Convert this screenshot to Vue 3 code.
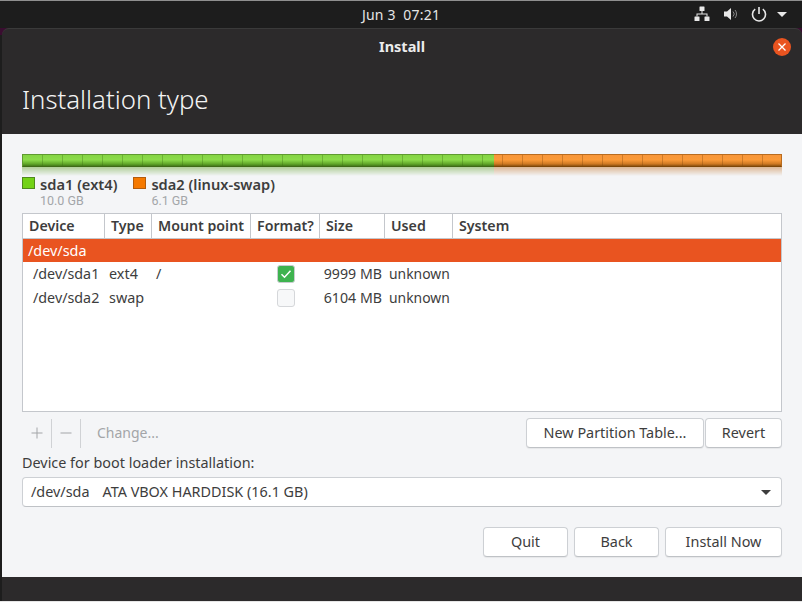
<template>
  <div class="screen">
    <div class="topbar">
      <div class="clock">Jun 3&nbsp; 07:21</div>
      <div class="tray">
        <svg width="16" height="16" viewBox="0 0 16 16" class="net">
          <rect x="5.5" y="0.5" width="5" height="4.5" rx="0.5" />
          <rect x="0.5" y="10.5" width="5" height="4.5" rx="0.5" />
          <rect x="10.5" y="10.5" width="5" height="4.5" rx="0.5" />
          <path d="M7.5 5h1v2.5h5v3h-1v-2H3.500v2h-1v-3h5z" />
        </svg>
        <svg width="16" height="16" viewBox="0 0 16 16" class="vol">
          <path d="M1 5.500h3L8 2v12L4 10.500H1z" fill="#e8e8e8" />
          <path d="M10 5.500a3.500 3.500 0 0 1 0 5M12 4a6 6 0 0 1 0 8" fill="none" stroke="#8a8a8a" stroke-width="1" />
        </svg>
        <svg width="16" height="16" viewBox="0 0 16 16" class="power">
          <path d="M4.200 3.200a6.500 6.500 0 1 0 7.600 0" fill="none" stroke="#e8e8e8" stroke-width="1.600" />
          <path d="M8 1v7" stroke="#e8e8e8" stroke-width="1.600" />
        </svg>
        <span class="tray-caret"></span>
      </div>
    </div>

    <div class="desk">
      <div class="window">
        <div class="titlebar">
          <span class="title">Install</span>
          <span class="close">
            <svg width="10" height="10" viewBox="0 0 10 10">
              <path d="M1.500 1.500l7 7M8.500 1.500l-7 7" stroke="#fff" stroke-width="1.300" />
            </svg>
          </span>
        </div>
        <div class="page-head">Installation type</div>

        <div class="content">
          <div class="bar">
            <div class="bar-green" :style="{ width: greenWidth + 'px' }"></div>
            <div class="bar-orange"></div>
          </div>
          <div class="bar-shadow"></div>

          <div class="legend">
            <div v-for="p in legend" :key="p.name" class="legend-item">
              <span class="swatch" :class="p.cls"></span>
              <div>
                <div class="legend-name">{{ p.name }}</div>
                <div class="legend-size">{{ p.size }}</div>
              </div>
            </div>
          </div>

          <div class="table">
            <div class="thead cols">
              <div v-for="c in columns" :key="c" class="th">{{ c }}</div>
            </div>
            <div class="row-selected">/dev/sda</div>
            <div v-for="r in rows" :key="r.device" class="row cols">
              <div class="td dev">{{ r.device }}</div>
              <div class="td">{{ r.type }}</div>
              <div class="td mount">{{ r.mount }}</div>
              <div class="td format">
                <span class="check" :class="{ on: r.format }">
                  <svg v-if="r.format" width="12" height="12" viewBox="0 0 12 12">
                    <path d="M1.500 6.200l3 3 6-6.500" fill="none" stroke="#fff" stroke-width="1.500" />
                  </svg>
                </span>
              </div>
              <div class="td size">{{ r.size }}</div>
              <div class="td used">{{ r.used }}</div>
              <div class="td"></div>
            </div>
          </div>

          <div class="toolbar">
            <div class="tools">
              <span class="tool">
                <svg width="12" height="12" viewBox="0 0 12 12"><path d="M6 0.500v11M0.500 6h11" stroke="#a3a5a8" stroke-width="1" /></svg>
              </span>
              <span class="tool">
                <svg width="12" height="12" viewBox="0 0 12 12"><path d="M0.500 6h11" stroke="#a3a5a8" stroke-width="1" /></svg>
              </span>
              <span class="change">Change...</span>
            </div>
            <div class="tool-buttons">
              <button class="btn new-table">New Partition Table...</button>
              <button class="btn revert">Revert</button>
            </div>
          </div>

          <div class="boot-label">Device for boot loader installation:</div>
          <div class="combo">
            <span class="combo-dev">/dev/sda</span>
            <span>ATA VBOX HARDDISK (16.1 GB)</span>
            <span class="combo-caret"></span>
          </div>

          <div class="actions">
            <button class="btn quit">Quit</button>
            <button class="btn back">Back</button>
            <button class="btn install">Install Now</button>
          </div>
        </div>
        <div class="footer"></div>
      </div>
    </div>
  </div>
</template>

<script setup>
const greenWidth = 472

const legend = [
  { name: 'sda1 (ext4)', size: '10.0 GB', cls: 'green' },
  { name: 'sda2 (linux-swap)', size: '6.1 GB', cls: 'orange' }
]

const columns = ['Device', 'Type', 'Mount point', 'Format?', 'Size', 'Used', 'System']

const rows = [
  { device: '/dev/sda1', type: 'ext4', mount: '/', format: true, size: '9999 MB', used: 'unknown' },
  { device: '/dev/sda2', type: 'swap', mount: '', format: false, size: '6104 MB', used: 'unknown' }
]
</script>

<style>
html, body { margin: 0; padding: 0; background: #1d1d1d; overflow: hidden; }
</style>

<style scoped>
.screen {
  width: 802px;
  height: 602px;
  overflow: hidden;
  background: #1d1d1d;
  border-top: 1px solid #8f8f8f;
  border-bottom: 1px solid #e6e6e6;
  box-sizing: border-box;
  font-family: "Noto Sans", sans-serif;
  font-size: 14.4px;
  color: #3d3d3d;
  display: flex;
  flex-direction: column;
}
.topbar {
  height: 27px;
  flex: none;
  position: relative;
  display: flex;
  align-items: center;
  justify-content: center;
  color: #e6e6e6;
  font-size: 14px;
}
.clock { letter-spacing: 0.2px; }
.tray {
  position: absolute;
  right: 15px;
  top: 5px;
  display: flex;
  align-items: center;
  gap: 12px;
}
.net { fill: #e8e8e8; margin-right: 1px; }
.tray-caret {
  width: 0;
  height: 0;
  margin-left: -2px;
  margin-top: 1px;
  border-left: 5px solid transparent;
  border-right: 5px solid transparent;
  border-top: 5px solid #e8e8e8;
}
.desk {
  flex: 1;
  min-height: 0;
  display: flex;
  padding-left: 2px;
  background: linear-gradient(#3a0d30 7px, #1d1d1d 7px);
}
.window {
  flex: 1;
  border-radius: 7px 7px 0 0;
  background: #2c2a2b;
  border-top: 1px solid #3a3a3a;
  display: flex;
  flex-direction: column;
  min-height: 0;
}
.titlebar {
  height: 36px;
  flex: none;
  position: relative;
  display: flex;
  align-items: center;
  justify-content: center;
}
.title {
  color: #ececec;
  font-weight: 700;
  font-size: 14.500px;
  padding-bottom: 2px;
}
.close {
  position: absolute;
  right: 11px;
  top: 9px;
  width: 18px;
  height: 18px;
  border-radius: 50%;
  background: #e95420;
  display: flex;
  align-items: center;
  justify-content: center;
}
.page-head {
  height: 69px;
  flex: none;
  padding-left: 20px;
  box-sizing: border-box;
  color: #f4f4f4;
  font-size: 25.800px;
  font-weight: 300;
  line-height: 1;
  padding-top: 22px;
}
.content {
  height: 443px;
  flex: none;
  background: #f4f5f7;
  padding: 20px 20px 0;
  box-sizing: border-box;
}
.bar {
  height: 13px;
  display: flex;
  box-sizing: border-box;
}
.bar-green, .bar-orange {
  height: 13px;
  box-sizing: border-box;
  background-size: 20px 100%, 100% 100%;
  background-repeat: repeat, no-repeat;
}
.bar-green {
  flex: none;
  border: 1px solid #5f9a30;
  border-right: 0;
  border-bottom-color: #3f6a17;
  background-image:
    linear-gradient(90deg, transparent 19px, rgba(60, 110, 20, 0.35) 19px),
    linear-gradient(#84d444 0, #8cdb4a 45%, #62a92a 80%, #447a1a 100%);
}
.bar-orange {
  flex: 1;
  border: 1px solid #b96c1f;
  border-left: 0;
  border-bottom-color: #7d4708;
  background-position: -11px 0, 0 0;
  background-image:
    linear-gradient(90deg, transparent 19px, rgba(130, 70, 10, 0.35) 19px),
    linear-gradient(#f7963a 0, #fb9a38 45%, #d07a22 80%, #8e5210 100%);
}
.bar-shadow {
  height: 9px;
  background: linear-gradient(90deg, #6da83a 0, #6da83a 472px, #c47a35 472px, #c47a35 100%);
  -webkit-mask-image: linear-gradient(rgba(0, 0, 0, 0.5), transparent);
  mask-image: linear-gradient(rgba(0, 0, 0, 0.5), transparent);
}
.legend {
  display: flex;
  gap: 16px;
  height: 37px;
}
.legend-item {
  display: flex;
  gap: 5px;
}
.swatch {
  width: 13px;
  height: 12px;
  margin-top: 1px;
  box-sizing: border-box;
  border: 1px solid #4f8a1c;
  flex: none;
}
.swatch.green { background: #73d216; }
.swatch.orange { background: #f57900; border-color: #b35c0c; }
.legend-name {
  font-weight: 600;
  font-size: 14.650px;
  line-height: 16px;
  color: #3d3d3d;
}
.legend-size {
  font-family: Roboto, sans-serif;
  font-size: 12.500px;
  line-height: 16px;
  margin-top: 1px;
  color: #a3a6a9;
}
.table {
  height: 199px;
  box-sizing: border-box;
  background: #fff;
  border: 1px solid #c4c7cc;
}
.cols {
  display: grid;
  grid-template-columns: 82px 47px 99px 69px 65px 68px 1fr;
}
.thead {
  height: 25px;
  box-sizing: border-box;
  border-bottom: 1px solid #c4c7cc;
}
.th {
  font-weight: 600;
  font-size: 14.200px;
  line-height: 24px;
  padding-left: 6px;
  border-right: 1px solid #c4c7cc;
  white-space: nowrap;
  overflow: hidden;
}
.th:last-child { border-right: 0; }
.row-selected {
  height: 23px;
  line-height: 24px;
  background: #e95420;
  color: #fff;
  padding-left: 5px;
}
.row { height: 24px; }
.td {
  line-height: 24px;
  padding-left: 4px;
  white-space: nowrap;
}
.dev { padding-left: 10px; font-size: 14.300px; }
.mount { padding-left: 4px; }
.used { font-size: 13.900px; }
.format {
  display: flex;
  align-items: center;
  justify-content: center;
  padding-left: 0;
}
.check {
  width: 18px;
  height: 18px;
  box-sizing: border-box;
  border-radius: 3px;
  border: 1px solid #d5d7da;
  background: #f7f8f9;
  display: flex;
  align-items: center;
  justify-content: center;
}
.check.on {
  background: #3eb34f;
  border-color: #c9ccd0;
}
.size { text-align: right; padding-right: 3px; padding-left: 0; font-size: 14.200px; }
.toolbar {
  height: 30px;
  margin-top: 6px;
  display: flex;
  justify-content: space-between;
  align-items: center;
}
.tools {
  display: flex;
  align-items: center;
  height: 30px;
  padding-left: 1px;
}
.tool {
  width: 29px;
  height: 29px;
  box-sizing: border-box;
  display: flex;
  align-items: center;
  justify-content: center;
  border-right: 1px solid #d0d2d5;
}
.change {
  color: #a3a5a8;
  padding-left: 16px;
  padding-bottom: 2px;
  font-size: 14px;
}
.tool-buttons { display: flex; gap: 1px; }
.btn {
  height: 30px;
  box-sizing: border-box;
  padding: 0 0 2px;
  background: #fff;
  border: 1px solid #cdd0d4;
  border-bottom-color: #bfc2c6;
  border-radius: 4px;
  font-family: inherit;
  font-size: 14.400px;
  color: #3d3d3d;
  box-shadow: 0 1px 1px rgba(0, 0, 0, 0.06);
}
.new-table { width: 178px; }
.revert { width: 77px; }
.boot-label {
  margin-top: 3px;
  height: 24px;
  line-height: 24px;
}
.combo {
  height: 30px;
  margin-top: 2px;
  box-sizing: border-box;
  background: #fff;
  border: 1px solid #cdd0d4;
  border-bottom-color: #bfc2c6;
  border-radius: 4px;
  display: flex;
  align-items: center;
  padding: 0 0 2px 8px;
  position: relative;
}
.combo-dev { margin-right: 13px; }
.combo-caret {
  position: absolute;
  right: 10px;
  top: 12px;
  width: 0;
  height: 0;
  border-left: 5px solid transparent;
  border-right: 5px solid transparent;
  border-top: 5px solid #3d3d3d;
}
.actions {
  display: flex;
  justify-content: flex-end;
  gap: 6px;
  margin-top: 20px;
}
.quit { width: 85px; }
.back { width: 85px; }
.install { width: 117px; }
.footer {
  flex: 1;
  background: #2c2a2b;
}
</style>
